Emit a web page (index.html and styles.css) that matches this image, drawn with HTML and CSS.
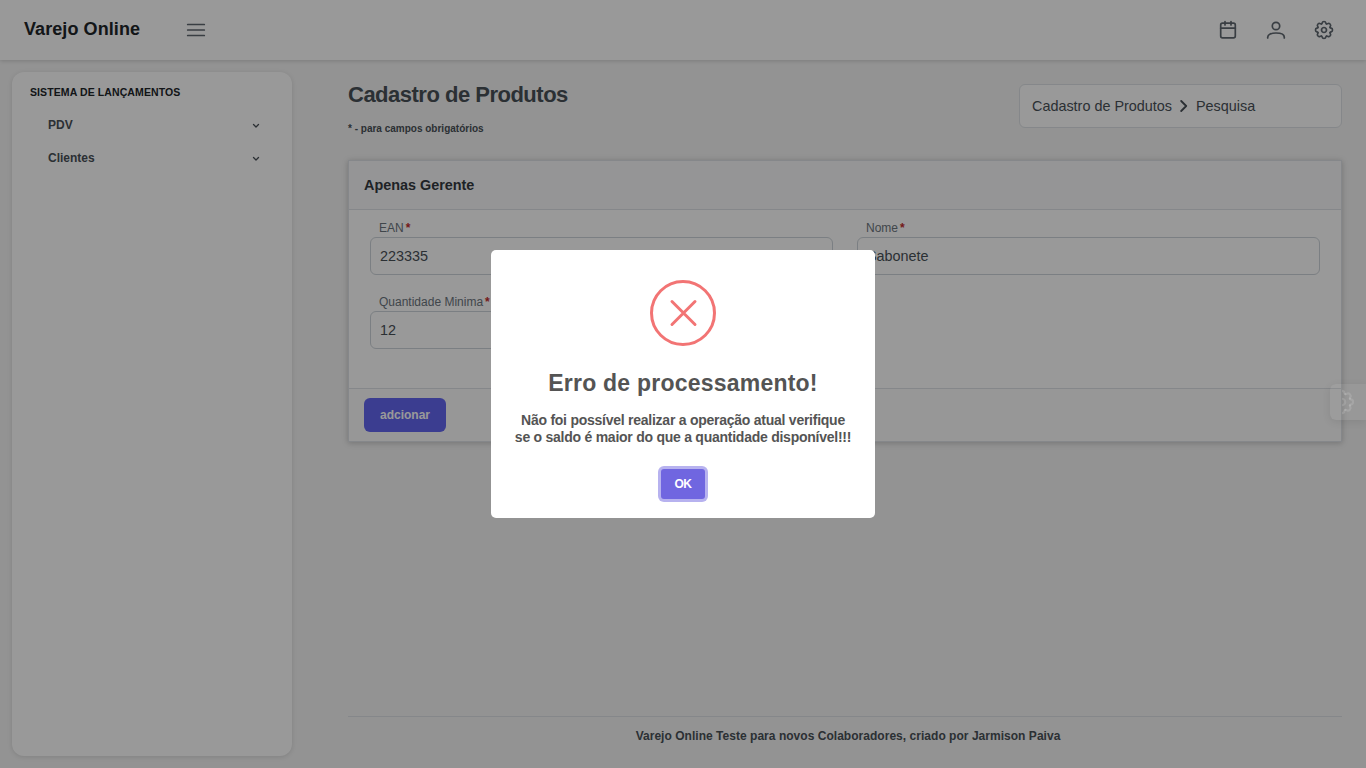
FILE: index.html
```html
<!DOCTYPE html>
<html lang="pt-BR">
<head>
<meta charset="utf-8">
<title>Varejo Online</title>
<link rel="stylesheet" href="styles.css">
</head>
<body>
<header class="topbar">
  <div class="brand">Varejo Online</div>
  <svg class="menu-icon" width="20" height="14" viewBox="0 0 20 14"><path d="M1.7 1.500h16.600M1.700 7h16.600M1.700 12.500h16.600"/></svg>
  <nav class="actions">
    <svg width="20" height="20" viewBox="0 0 20 20"><rect x="2.700" y="3.200" width="14.600" height="14.600" rx="1.800"/><path d="M2.700 8.200h14.600M7 1.500v3.500M13 1.500v3.500"/></svg>
    <svg width="20" height="20" viewBox="0 0 20 20"><circle cx="10" cy="6" r="3.700"/><path d="M1.700 18v-.8c0-2.700 3.800-4.200 8.300-4.200s8.300 1.500 8.300 4.200v.8"/></svg>
    <svg width="20" height="20" viewBox="0 0 20 20"><use href="#gear"/></svg>
  </nav>
</header>
<div class="layout">
  <aside class="sidebar">
    <div class="side-title">SISTEMA DE LANÇAMENTOS</div>
    <div class="side-item"><span>PDV</span><svg width="8" height="6" viewBox="0 0 8 6"><path d="M1.500 1.500l2.500 2.500 2.500-2.500"/></svg></div>
    <div class="side-item"><span>Clientes</span><svg width="8" height="6" viewBox="0 0 8 6"><path d="M1.500 1.500l2.500 2.500 2.500-2.500"/></svg></div>
  </aside>
  <div class="content">
    <div class="page-head">
      <div>
        <h1>Cadastro de Produtos</h1>
        <p class="hint">* - para campos obrigatórios</p>
      </div>
      <div class="crumbs"><span>Cadastro de Produtos</span><svg width="8" height="12" viewBox="0 0 8 12"><path d="M1.200 1l5 5-5 5"/></svg><span>Pesquisa</span></div>
    </div>
    <section class="card">
      <div class="card-head">Apenas Gerente</div>
      <div class="card-body">
        <div class="field"><label>EAN<b>*</b></label><div class="input">223335</div></div>
        <div class="field"><label>Nome<b>*</b></label><div class="input">Sabonete</div></div>
        <div class="field"><label>Quantidade Minima<b>*</b></label><div class="input">12</div></div>
      </div>
      <div class="card-foot"><button class="add">adcionar</button></div>
    </section>
    <footer class="footer"><span>Varejo Online Teste para novos Colaboradores, criado por Jarmison Paiva</span></footer>
  </div>
</div>
<svg class="defs" width="0" height="0"><defs>
  <path id="tooth" d="M6.100-2.530Q6.500-1.900 7.200-1.800Q8.500-1.600 8.500 0Q8.500 1.600 7.200 1.800Q6.500 1.900 6.100 2.530"/>
  <g id="gear" transform="translate(10 10)"><circle r="2.500"/><use href="#tooth"/><use href="#tooth" transform="rotate(45)"/><use href="#tooth" transform="rotate(90)"/><use href="#tooth" transform="rotate(135)"/><use href="#tooth" transform="rotate(180)"/><use href="#tooth" transform="rotate(225)"/><use href="#tooth" transform="rotate(270)"/><use href="#tooth" transform="rotate(315)"/></g>
</defs></svg>
<div class="overlay">
  <div class="modal">
    <svg class="error-icon" width="66" height="66" viewBox="0 0 66 66"><circle cx="33" cy="33" r="31.500"/><path d="M22 21.500l23 23M45 21.500l-23 23"/></svg>
    <h2>Erro de processamento!</h2>
    <p class="message">Não foi possível realizar a operação atual verifique<br>se o saldo é maior do que a quantidade disponível!!!</p>
    <button class="ok">OK</button>
  </div>
</div>
<div class="config"><svg width="26" height="26" viewBox="0 0 20 20"><use href="#gear"/></svg></div>
</body>
</html>
```

FILE: styles.css
```css
* { box-sizing: border-box; }
body { margin: 0; height: 768px; overflow: hidden; background: #f5f5f5; color: #495057; font-family: "Liberation Sans", Arial, sans-serif; font-size: 14px; }
svg { fill: none; stroke: #6c757d; stroke-width: 1.7; stroke-linecap: round; stroke-linejoin: round; flex-shrink: 0; }
h1, h2, p { margin: 0; }
button { border: 0; font-family: inherit; font-weight: bold; }
.topbar { height: 60px; background: #fff; box-shadow: 0 1px 4px rgba(0,0,0,.16); display: flex; align-items: center; padding: 0 32px 0 24px; }
.brand { width: 162px; font-size: 18px; font-weight: bold; line-height: 20px; margin-top: -2px; letter-spacing: .08px; color: #212529; }
.actions { margin-left: auto; display: flex; gap: 28px; }
.topbar svg { stroke: #606870; }
.layout { display: flex; height: 708px; padding: 12px 24px 12px 12px; }
.sidebar { width: 280px; height: 684px; background: #fff; border-radius: 12px; box-shadow: 0 1px 5px rgba(0,0,0,.12); padding: 13px 32px 0 18px; }
.side-title { font-size: 10.5px; line-height: 14px; font-weight: bold; color: #212529; letter-spacing: .1px; margin-bottom: 9px; }
.side-item { height: 33px; padding-left: 18px; display: flex; align-items: center; justify-content: space-between; font-size: 12px; font-weight: bold; }
.side-item svg { margin-top: 2px; stroke: #495057; stroke-width: 1.300; }
.content { flex: 1; margin-left: 56px; padding-top: 12px; display: flex; flex-direction: column; }
.page-head { height: 76px; display: flex; justify-content: space-between; align-items: flex-start; }
h1 { font-size: 22px; line-height: 22px; letter-spacing: -.5px; }
.hint { font-size: 10px; font-weight: bold; line-height: 12px; margin-top: 17px; }
.crumbs { width: 323px; height: 44px; border: 1px solid #dee2e6; border-radius: 6px; background: #fff; padding: 0 12px; display: flex; align-items: center; gap: 8px; font-size: 14.4px; }
.crumbs svg { stroke: #495057; stroke-width: 1.800; }
.card { height: 282px; border: 1px solid #dee2e6; background: #fff; box-shadow: 0 1px 6px rgba(0,0,0,.22); }
.card-head { height: 49px; background: #f8f9fa; border-bottom: 1px solid #dee2e6; padding: 0 15px; display: flex; align-items: center; font-size: 14.4px; font-weight: bold; color: #343a40; }
.card-body { height: 178px; padding: 10px 21px 0; display: grid; grid-template-columns: 463px 463px; gap: 19px 24px; align-content: start; }
.field { height: 55px; }
.field label { display: block; height: 17px; line-height: 17px; padding-left: 9px; font-size: 12px; color: #6c757d; }
.field b { color: #c22c2c; margin-left: 2px; }
.input { height: 38px; border: 1px solid #ced4da; border-radius: 6px; padding: 0 9px; display: flex; align-items: center; font-size: 14.4px; }
.card-foot { height: 53px; border-top: 1px solid #dee2e6; background: #fcfcfc; padding: 9px 15px; }
.add { display: block; width: 82px; height: 34px; padding: 0; border-radius: 6px; background: #6366f1; color: #fff; font-size: 12px; }
.footer { margin-top: auto; height: 40px; border-top: 1px solid #dee2e6; padding: 12px 0 0 6px; text-align: center; font-size: 12px; line-height: 14px; letter-spacing: .03px; font-weight: bold; }
.config { position: absolute; right: 0; top: 384px; width: 36px; height: 36px; border-radius: 6px 0 0 6px; background: rgba(255,255,255,.05); box-shadow: 0 2px 8px rgba(0,0,0,.09); overflow: hidden; }
.config svg { display: block; margin: 5px 0 0 -1px; stroke: rgba(255,255,255,.13); clip-path: inset(0 0 0 13px); }
.defs { display: block; }
.overlay { position: absolute; inset: 0; background: rgba(0,0,0,.4); display: flex; align-items: center; justify-content: center; }
.modal { width: 384px; height: 268px; border-radius: 5px; background: #fff; color: #545454; display: flex; flex-direction: column; align-items: center; padding-top: 30px; }
.error-icon { display: block; stroke: #f27474; stroke-width: 3; }
.modal h2 { margin-top: 23px; font-size: 23px; line-height: 28px; letter-spacing: .22px; white-space: nowrap; }
.message { margin-top: 15px; font-size: 14px; line-height: 17px; letter-spacing: -.25px; font-weight: bold; text-align: center; white-space: nowrap; }
.ok { width: 44px; height: 30px; margin-top: 23px; border-radius: 3px; background: #7066e0; color: #fff; font-size: 12px; letter-spacing: -.4px; padding: 0; box-shadow: 0 0 0 3px rgba(112,102,224,.5); }
```
